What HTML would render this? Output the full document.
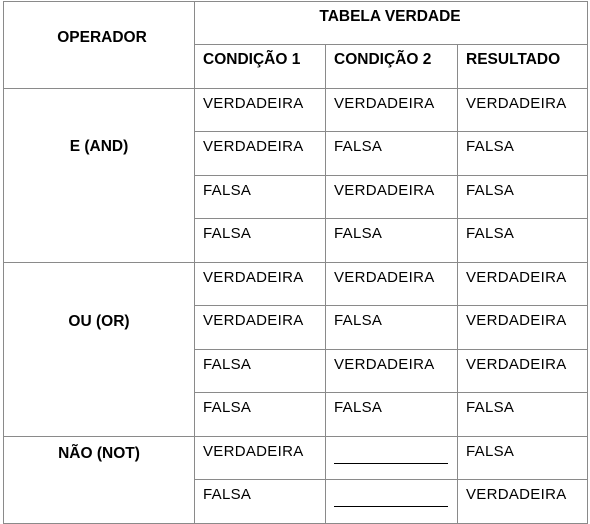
<!DOCTYPE html>
<html><head><meta charset="utf-8"><style>
body{margin:0;width:590px;height:524px;background:#fff;position:relative;overflow:hidden;font-family:"Liberation Sans",sans-serif;font-size:15px;color:#000}
.h{position:absolute;height:1px;background:#8a8a8a}
.v{position:absolute;width:1px;background:#8a8a8a}
.t{position:absolute;white-space:nowrap;line-height:19px;letter-spacing:0.3px}
.b{font-weight:bold;letter-spacing:0;font-size:15.5px}
.c{transform:translateX(-50%)}
.u{position:absolute;height:1px;background:#000;left:334px;width:114px}
</style></head><body>
<div class="h" style="left:3px;width:585px;top:1px"></div>
<div class="h" style="left:194px;width:394px;top:44px"></div>
<div class="h" style="left:3px;width:585px;top:88px"></div>
<div class="h" style="left:194px;width:394px;top:131px"></div>
<div class="h" style="left:194px;width:394px;top:175px"></div>
<div class="h" style="left:194px;width:394px;top:218px"></div>
<div class="h" style="left:3px;width:585px;top:262px"></div>
<div class="h" style="left:194px;width:394px;top:305px"></div>
<div class="h" style="left:194px;width:394px;top:349px"></div>
<div class="h" style="left:194px;width:394px;top:392px"></div>
<div class="h" style="left:3px;width:585px;top:436px"></div>
<div class="h" style="left:194px;width:394px;top:479px"></div>
<div class="h" style="left:3px;width:585px;top:523px"></div>
<div class="v" style="left:3px;top:1px;height:523px"></div>
<div class="v" style="left:194px;top:1px;height:523px"></div>
<div class="v" style="left:325px;top:44px;height:480px"></div>
<div class="v" style="left:457px;top:44px;height:480px"></div>
<div class="v" style="left:587px;top:1px;height:523px"></div>

<div class="t b c" style="left:102px;top:28px">OPERADOR</div>
<div class="t b c" style="left:390px;top:7px">TABELA VERDADE</div>
<div class="t b" style="left:203px;top:50px">CONDIÇÃO 1</div>
<div class="t b" style="left:334px;top:50px">CONDIÇÃO 2</div>
<div class="t b" style="left:466px;top:50px">RESULTADO</div>
<div class="t b c" style="left:99px;top:137px">E (AND)</div>
<div class="t b c" style="left:99px;top:312px">OU (OR)</div>
<div class="t b c" style="left:99px;top:444px">NÃO (NOT)</div>

<div class="t" style="left:203px;top:94px">VERDADEIRA</div><div class="t" style="left:334px;top:94px">VERDADEIRA</div><div class="t" style="left:466px;top:94px">VERDADEIRA</div>
<div class="t" style="left:203px;top:137px">VERDADEIRA</div><div class="t" style="left:334px;top:137px">FALSA</div><div class="t" style="left:466px;top:137px">FALSA</div>
<div class="t" style="left:203px;top:181px">FALSA</div><div class="t" style="left:334px;top:181px">VERDADEIRA</div><div class="t" style="left:466px;top:181px">FALSA</div>
<div class="t" style="left:203px;top:224px">FALSA</div><div class="t" style="left:334px;top:224px">FALSA</div><div class="t" style="left:466px;top:224px">FALSA</div>
<div class="t" style="left:203px;top:268px">VERDADEIRA</div><div class="t" style="left:334px;top:268px">VERDADEIRA</div><div class="t" style="left:466px;top:268px">VERDADEIRA</div>
<div class="t" style="left:203px;top:311px">VERDADEIRA</div><div class="t" style="left:334px;top:311px">FALSA</div><div class="t" style="left:466px;top:311px">VERDADEIRA</div>
<div class="t" style="left:203px;top:355px">FALSA</div><div class="t" style="left:334px;top:355px">VERDADEIRA</div><div class="t" style="left:466px;top:355px">VERDADEIRA</div>
<div class="t" style="left:203px;top:398px">FALSA</div><div class="t" style="left:334px;top:398px">FALSA</div><div class="t" style="left:466px;top:398px">FALSA</div>
<div class="t" style="left:203px;top:442px">VERDADEIRA</div><div class="t" style="left:466px;top:442px">FALSA</div>
<div class="u" style="top:463px"></div>
<div class="t" style="left:203px;top:485px">FALSA</div><div class="t" style="left:466px;top:485px">VERDADEIRA</div>
<div class="u" style="top:506px"></div>
</body></html>
